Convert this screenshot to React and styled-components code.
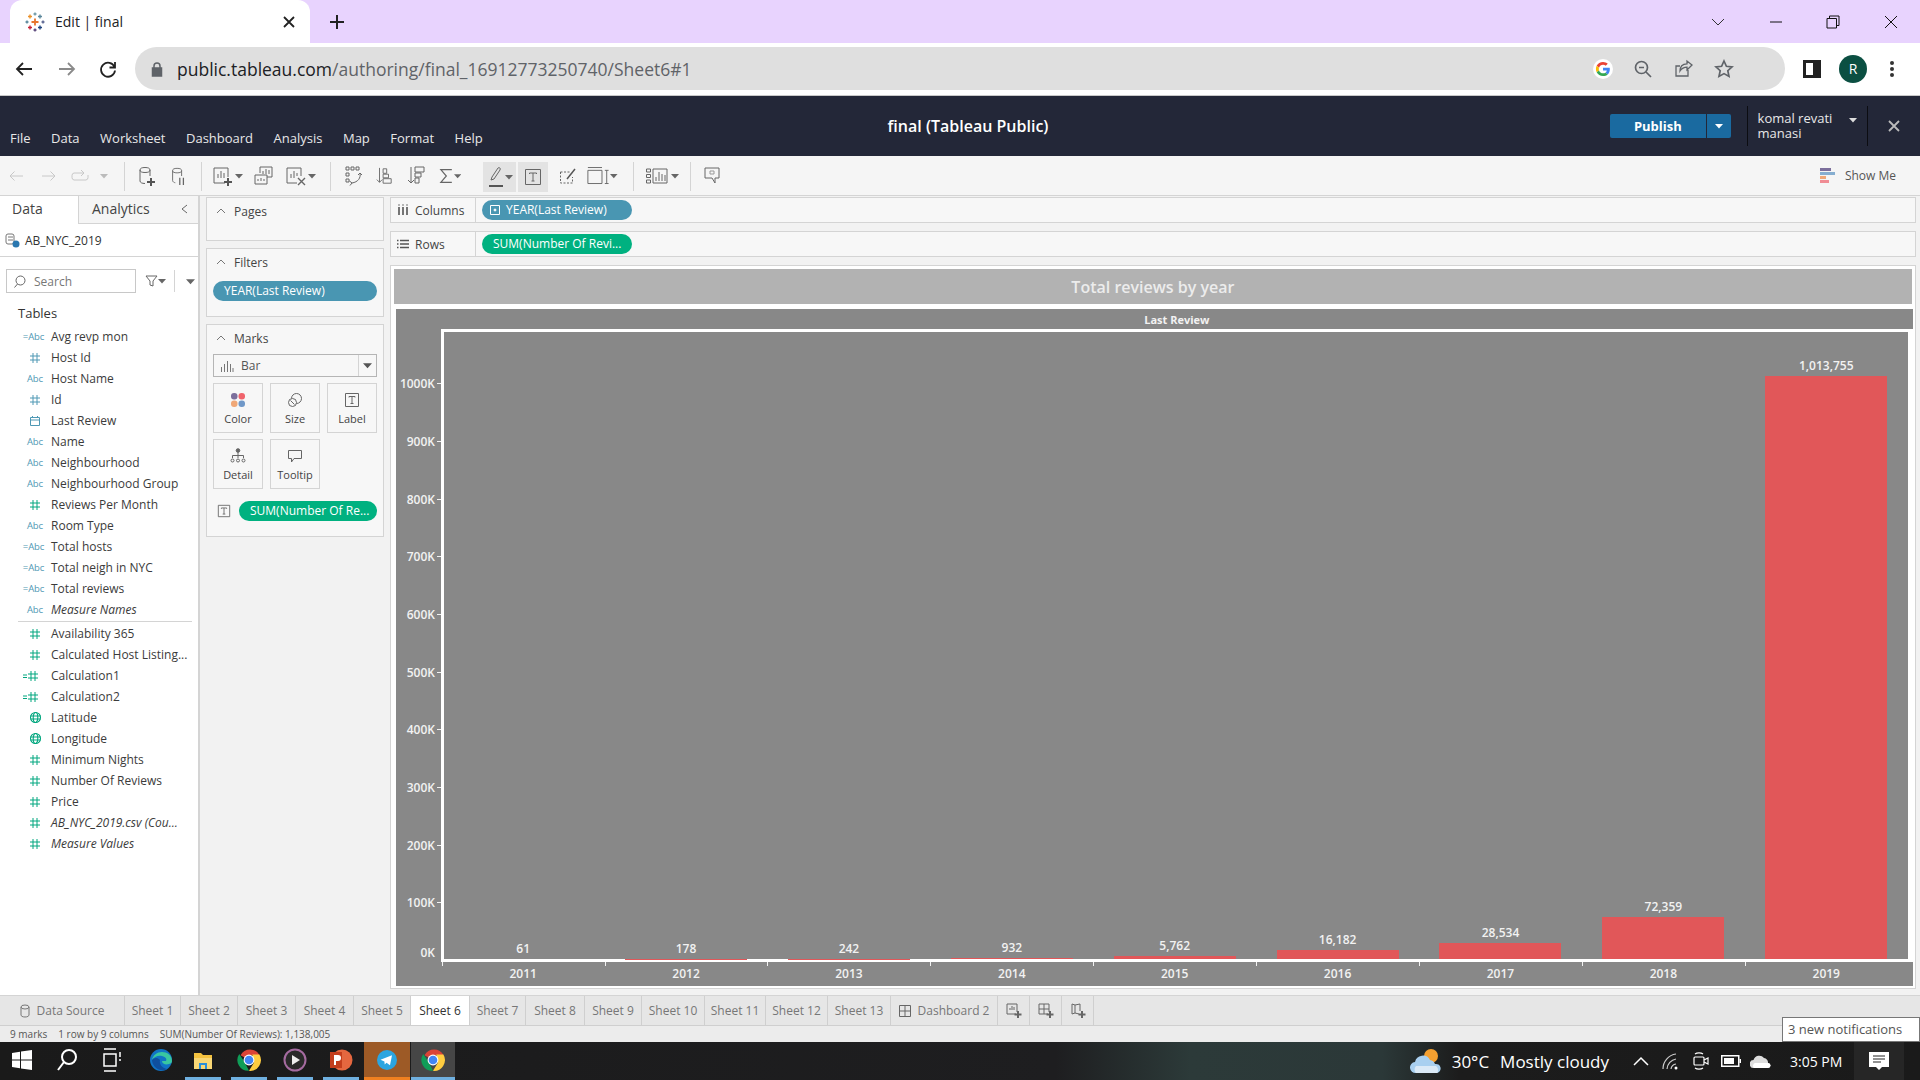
import React from 'react';
import styled, { createGlobalStyle } from 'styled-components';

const UI_FONT = `'Open Sans', 'Liberation Sans', sans-serif`;

const GlobalStyle = createGlobalStyle`
  html, body { margin: 0; padding: 0; background: #fff; overflow: hidden; }
  * { box-sizing: border-box; }
  body { font-family: ${UI_FONT}; }
`;

const Page = styled.div`
  position: relative;
  width: 1920px;
  height: 1080px;
  display: flex;
  flex-direction: column;
  overflow: hidden;
`;

/* browser chrome */
const TabStrip = styled.div`
  height: 43px;
  background: #e8d3fe;
  display: flex;
  align-items: stretch;
  padding-left: 10px;
`;
const BrowserTab = styled.div`
  width: 300px;
  background: #fff;
  border-radius: 12px 12px 0 0;
  display: flex;
  align-items: center;
  padding: 0 14px 0 15px;
  font-size: 14px;
  color: #202124;
`;
const TabTitle = styled.span`
  margin-left: 10px;
  flex: 1;
`;
const NewTab = styled.div`
  width: 54px;
  display: flex;
  align-items: center;
  justify-content: center;
`;
const WindowControls = styled.div`
  margin-left: auto;
  display: flex;
  align-items: center;
  padding-right: 0;
`;
const WinBtn = styled.div`
  width: ${p => p.$w}px;
  height: 36px;
  display: flex;
  align-items: center;
  justify-content: center;
`;
const BrowserBar = styled.div`
  height: 53px;
  background: #fff;
  border-bottom: 1px solid #c9c9c9;
  display: flex;
  align-items: center;
  padding: 0 0 1px 0;
`;
const NavBtn = styled.div`
  width: ${p => p.$w}px;
  display: flex;
  align-items: center;
  justify-content: center;
`;
const UrlBar = styled.div`
  width: 1650px;
  height: 43px;
  border-radius: 22px;
  background: #dfdfdf;
  display: flex;
  align-items: center;
  padding-left: 15px;
  font-size: 17.5px;
  color: #5f6368;
`;
const UrlHost = styled.span`
  color: #202124;
`;
const UrlText = styled.span`
  margin-left: 13px;
  flex: 1;
`;
const UrlIcon = styled.div`
  width: 40.5px;
  display: flex;
  justify-content: center;
`;
const Avatar = styled.div`
  width: 28px;
  height: 28px;
  border-radius: 50%;
  background: #0b4f42;
  color: #fff;
  font-size: 14px;
  display: flex;
  align-items: center;
  justify-content: center;
`;

/* tableau header */
const AppHeader = styled.div`
  height: 60px;
  background: #232738;
  display: grid;
  grid-template-columns: 1610px 310px;
  color: #fff;
`;
const HeaderLeft = styled.div`
  display: grid;
`;
const Menu = styled.div`
  grid-area: 1 / 1;
  display: flex;
  gap: 20.5px;
  align-self: end;
  padding: 0 0 9px 10px;
  font-size: 13px;
  color: #e8e8e8;
`;
const AppTitle = styled.div`
  grid-area: 1 / 1;
  justify-self: center;
  align-self: center;
  margin-left: 326px;
  font-size: 16px;
  font-weight: 600;
`;
const HeaderRight = styled.div`
  display: flex;
  align-items: center;
`;
const PublishMain = styled.div`
  width: 96px;
  height: 24px;
  background: #1a6aa0;
  border-radius: 2px 0 0 2px;
  font-size: 13px;
  font-weight: 700;
  display: flex;
  align-items: center;
  justify-content: center;
`;
const PublishArrow = styled.div`
  width: 24px;
  height: 24px;
  margin-left: 1px;
  background: #1a6aa0;
  border-radius: 0 2px 2px 0;
  display: flex;
  align-items: center;
  justify-content: center;
`;
const UserBox = styled.div`
  margin-left: 16px;
  width: 122px;
  height: 40px;
  border-left: 1px solid #0c0d12;
  border-right: 1px solid #0c0d12;
  padding: 5px 10px;
  font-size: 13px;
  line-height: 15px;
  color: #e8e8e8;
  display: flex;
  justify-content: space-between;
`;
const HeaderClose = styled.div`
  width: 52px;
  display: flex;
  justify-content: center;
`;

/* tableau toolbar */
const Toolbar = styled.div`
  height: 40px;
  background: #f5f5f5;
  border-bottom: 1px solid #d4d4d4;
  display: flex;
  align-items: stretch;
`;
const ToolCell = styled.div`
  width: ${p => p.$w}px;
  display: flex;
  align-items: center;
  justify-content: center;
`;
const ToolSep = styled.div`
  width: 1px;
  margin: 6px 0 4px;
  background: #d4d4d4;
`;
const ToolActive = styled.div`
  width: ${p => p.$w}px;
  height: 30px;
  margin: 6px 2px 0 0;
  background: #e3e3e3;
  display: flex;
  align-items: center;
  justify-content: center;
`;
const ShowMe = styled.div`
  margin-left: auto;
  padding-right: 24px;
  display: flex;
  align-items: center;
  gap: 9px;
  font-size: 12px;
  color: #555;
`;

/* workspace */
const Workspace = styled.div`
  height: 799px;
  display: flex;
`;
const DataPane = styled.div`
  width: 200px;
  background: #fff;
  border-right: 2px solid #d4d4d4;
  display: flex;
  flex-direction: column;
`;
const PaneTabs = styled.div`
  height: 28px;
  display: flex;
  font-size: 14px;
  color: #444;
`;
const PaneTab = styled.div`
  width: ${p => p.$w}px;
  padding-left: ${p => p.$pad}px;
  line-height: 26px;
  background: ${p => (p.$active ? '#fff' : '#f5f5f5')};
  border-right: ${p => (p.$active ? '1px solid #d4d4d4' : 'none')};
  border-bottom: ${p => (p.$active ? 'none' : '1px solid #d4d4d4')};
  display: flex;
`;
const Collapse = styled.span`
  margin-left: auto;
  padding-right: 8px;
`;
const SourceRow = styled.div`
  height: 33px;
  border-bottom: 1px solid #d4d4d4;
  display: flex;
  align-items: center;
  padding-left: 5px;
  gap: 5px;
  font-size: 12px;
  color: #333;
`;
const SearchRow = styled.div`
  height: 36px;
  display: flex;
  align-items: flex-end;
  padding-left: 6px;
`;
const SearchBox = styled.div`
  width: 130px;
  height: 24px;
  border: 1px solid #c8c8c8;
  display: flex;
  align-items: center;
  gap: 8px;
  padding-left: 6px;
  font-size: 12px;
  color: #777;
`;
const SearchTools = styled.div`
  height: 24px;
  display: flex;
  align-items: center;
`;
const SearchDivider = styled.div`
  width: 1px;
  height: 22px;
  background: #d4d4d4;
  margin: 0 11px 0 8px;
`;
const TablesTitle = styled.div`
  height: 33px;
  padding: 11px 0 0 18px;
  font-size: 13px;
  line-height: 18px;
  color: #333;
`;
const FieldRow = styled.div`
  height: 21px;
  display: flex;
  align-items: center;
  font-size: 12px;
  font-style: ${p => (p.$italic ? 'italic' : 'normal')};
  color: #3b3b3b;
  white-space: nowrap;
`;
const FieldIcon = styled.div`
  width: 51px;
  padding-left: 19px;
  flex: none;
  display: flex;
  align-items: center;
  justify-content: center;
`;
const AbcGlyph = styled.span`
  font-size: 9.5px;
  font-style: normal;
  color: #4f98b4;
  letter-spacing: -0.1px;
`;
const FieldDivider = styled.div`
  height: 1px;
  margin: 0 6px 0 18px;
  background: #d4d4d4;
`;
const FieldGap = styled.div`
  height: ${p => p.$h}px;
`;

const CardsPane = styled.div`
  width: 190px;
  background: #f2f2f2;
  padding: 1px 6px 0 6px;
  display: flex;
  flex-direction: column;
  gap: 7px;
`;
const Card = styled.div`
  height: ${p => p.$h}px;
  flex: none;
  background: #f7f7f7;
  border: 1px solid #d4d4d4;
  padding: 0 6px;
`;
const CardHead = styled.div`
  height: 26px;
  display: flex;
  align-items: center;
  gap: 7px;
  padding-left: 2px;
  font-size: 12px;
  color: #444;
`;
const Pill = styled.div`
  height: 20px;
  border-radius: 10px;
  background: ${p => (p.$green ? '#00b180' : '#4996b2')};
  color: #fff;
  font-size: 12px;
  line-height: 20px;
  white-space: nowrap;
  display: flex;
  align-items: center;
  gap: 5px;
  width: ${p => (p.$w ? `${p.$w}px` : '100%')};
  padding-left: ${p => p.$pad || 11}px;
`;
const MarkSelect = styled.div`
  height: 23px;
  margin-top: 3px;
  border: 1px solid #b5b5b5;
  background: #f7f7f7;
  display: flex;
  align-items: center;
  font-size: 12px;
  color: #555;
`;
const MarkSelectLabel = styled.div`
  flex: 1;
  display: flex;
  align-items: center;
  gap: 7px;
  padding-left: 6px;
`;
const MarkSelectArrow = styled.div`
  width: 18px;
  height: 100%;
  border-left: 1px solid #d4d4d4;
  display: flex;
  align-items: center;
  justify-content: center;
`;
const MarkGrid = styled.div`
  margin-top: 6px;
  display: grid;
  grid-template-columns: repeat(3, 50px);
  grid-auto-rows: 50px;
  gap: 6px 7px;
`;
const MarkBtn = styled.div`
  border: 1px solid #d4d4d4;
  display: flex;
  flex-direction: column;
  align-items: center;
  justify-content: flex-end;
  padding-bottom: 6px;
  gap: 3px;
  font-size: 11px;
  color: #444;
`;
const EncodingRow = styled.div`
  margin-top: 12px;
  display: flex;
  align-items: center;
  justify-content: space-between;
  padding-left: 4px;
`;

const ViewPane = styled.div`
  flex: 1;
  background: #f2f2f2;
  padding: 1px 7px 6px 0;
  display: flex;
  flex-direction: column;
  gap: 8px;
`;
const Shelf = styled.div`
  height: 26px;
  flex: none;
  background: #f7f7f7;
  border: 1px solid #d4d4d4;
  display: flex;
  align-items: center;
`;
const ShelfLabel = styled.div`
  width: 85px;
  height: 100%;
  border-right: 1px solid #d4d4d4;
  padding-left: 6px;
  display: flex;
  align-items: center;
  gap: 6px;
  font-size: 12px;
  color: #444;
  margin-right: 6px;
`;
const Canvas = styled.div`
  flex: 1;
  background: #fff;
  border: 1px solid #d4d4d4;
  padding: 3px 3px 2px 3px;
  display: flex;
  flex-direction: column;
`;
const ChartTitle = styled.div`
  height: 35px;
  flex: none;
  margin-right: 0;
  background: #b2b2b2;
  color: #ececec;
  font-size: 16px;
  font-weight: 600;
  display: flex;
  align-items: center;
  justify-content: center;
`;
const SheetPane = styled.div`
  flex: 1;
  margin: 5px -1px 0 2px;
  background: #888;
  display: grid;
  grid-template-columns: 45px 1fr;
  grid-template-rows: 20px 633px 1fr;
  color: #f2f2f2;
`;
const ColumnHeader = styled.div`
  grid-column: 1 / 3;
  padding-left: 45px;
  font-size: 11px;
  font-weight: 700;
  display: flex;
  align-items: center;
  justify-content: center;
`;
const YAxis = styled.div`
  padding-top: 25.85px;
`;
const YTick = styled.div`
  height: ${p => (p.$zero ? 40.6 : 57.7)}px;
  display: flex;
  align-items: center;
  justify-content: flex-end;
  font-size: 12px;
  font-weight: 600;
  gap: 2px;
`;
const TickMark = styled.span`
  width: 4px;
  height: 1px;
  background: ${p => (p.$hidden ? 'transparent' : '#f2f2f2')};
`;
const PlotFrame = styled.div`
  background: #fff;
  padding: 3px 5px 3px 3px;
  display: flex;
`;
const Plot = styled.div`
  flex: 1;
  background: #888;
  display: flex;
  align-items: stretch;
  padding-left: 0;
  margin-left: 0;
`;
const PlotColumns = styled.div`
  display: flex;
  margin-left: -2.3px;
`;
const PlotColumn = styled.div`
  width: 162.9px;
  flex: none;
  display: flex;
  flex-direction: column;
  align-items: center;
  justify-content: flex-end;
`;
const BarValue = styled.div`
  font-size: 12px;
  font-weight: 600;
  line-height: 16px;
  margin-bottom: 2px;
`;
const Bar = styled.div`
  width: 122px;
  background: #e15759;
`;
const XAxis = styled.div`
  grid-column: 1 / 3;
  padding-left: 45.7px;
  display: flex;
`;
const XCell = styled.div`
  width: 162.9px;
  flex: none;
  padding-top: 3px;
  text-align: center;
  font-size: 12px;
  font-weight: 600;
  background: linear-gradient(#f2f2f2, #f2f2f2) left top / 1px 4px no-repeat;
`;

/* sheet tabs */
const TabBar = styled.div`
  height: 31px;
  background: #e6e6e6;
  border-top: 1px solid #d4d4d4;
  border-bottom: 1px solid #cfcfcf;
  display: flex;
`;
const SheetTab = styled.div`
  width: ${p => p.$w}px;
  background: ${p => (p.$active ? '#fff' : 'transparent')};
  color: ${p => (p.$active ? '#333' : '#777')};
  border-right: 1px solid #cfcfcf;
  font-size: 12px;
  display: flex;
  align-items: center;
  justify-content: center;
  gap: 7px;
  white-space: nowrap;
`;
const StatusBar = styled.div`
  height: 16px;
  background: #ececec;
  display: flex;
  align-items: center;
  gap: 11px;
  padding-left: 10px;
  font-size: 10px;
  color: #555;
`;

/* windows taskbar */
const Taskbar = styled.div`
  height: 38px;
  flex: none;
  background: linear-gradient(90deg, #1a1a1a 0, #1e1e20 55%, #2c3a39 62%, #2b3838 72%, #1c1c1c 76%, #1a1a1a 100%);
  display: flex;
  align-items: center;
  color: #fff;
`;
const TaskIcon = styled.div`
  width: ${p => p.$w}px;
  height: 38px;
  flex: none;
  display: flex;
  align-items: center;
  justify-content: center;
  background: ${p => p.$bg || 'transparent'};
  border-bottom: 3px solid ${p => p.$line || 'transparent'};
  margin-right: ${p => p.$mr || 0}px;
`;
const Tray = styled.div`
  margin-left: auto;
  display: flex;
  align-items: center;
  height: 38px;
`;
const Weather = styled.span`
  font-size: 17px;
  margin-left: ${p => p.$ml}px;
  white-space: nowrap;
`;
const TrayIcon = styled.div`
  width: 30px;
  display: flex;
  justify-content: center;
`;
const Clock = styled.span`
  font-size: 14px;
  width: 52px;
  margin: 0 12px 0 14px;
  white-space: nowrap;
`;
const NoticeBtn = styled.div`
  width: 50px;
  height: 38px;
  background: #262626;
  display: flex;
  align-items: center;
  justify-content: center;
  margin-right: 16px;
`;
const Notice = styled.div`
  position: absolute;
  right: 0;
  bottom: 38px;
  width: 138px;
  height: 25px;
  background: #fff;
  border: 1px solid #777;
  font-size: 13px;
  line-height: 23px;
  padding-left: 5px;
  color: #555;
  white-space: nowrap;
`;

/* icons */
const Ic = ({ w = 20, h = 20, c = '#666', sw = 1, children, vb }) => (
  <svg width={w} height={h} viewBox={vb || `0 0 ${w} ${h}`} fill="none" stroke={c} strokeWidth={sw}>
    {children}
  </svg>
);
const Caret = ({ c = '#666', s = 6 }) => (
  <svg width={s + 2} height={s} viewBox="0 0 8 6"><path d="M0 1h8L4 5.5z" fill={c} /></svg>
);
const Hash = ({ c = '#00a67e' }) => (
  <Ic w={12} h={12} c={c}>
    <path d="M4 1v10M8 1v10M1 4h10M1 8h10" />
  </Ic>
);
const CalcHash = ({ c = '#00a67e' }) => (
  <span style={{ display: 'flex', marginLeft: -9 }}>
    <Ic w={4} h={12} c={c}><path d="M0 5h4M0 7.5h4" /></Ic>
    <Hash c={c} />
  </span>
);
const CalendarIcon = () => (
  <Ic w={12} h={12} c="#4f98b4">
    <path d="M1.5 2.5h9v8h-9zM1.5 5h9M3.5 1v2M8.5 1v2" />
  </Ic>
);
const GlobeIcon = () => (
  <Ic w={13} h={13} c="#00a67e" sw={1.1}>
    <circle cx="6.5" cy="6.5" r="5" />
    <ellipse cx="6.5" cy="6.5" rx="2.3" ry="5" />
    <path d="M1.5 5h10M1.5 8h10" />
  </Ic>
);
const TableauLogo = () => (
  <svg width="20" height="20" viewBox="0 0 20 20" strokeWidth="1.4" fill="none">
    <path d="M10 6.5v7M6.5 10h7" stroke="#e8762d" strokeWidth="1.8" />
    <path d="M5 2.5v4M3 4.5h4" stroke="#eb9129" />
    <path d="M15 2.5v4M13 4.5h4" stroke="#5b879b" />
    <path d="M5 13.5v4M3 15.5h4" stroke="#c72035" />
    <path d="M15 13.5v4M13 15.5h4" stroke="#1f447e" />
    <path d="M10 .5v3M8.5 2h3" stroke="#7099a6" />
    <path d="M10 16.5v3M8.5 18h3" stroke="#59457a" />
    <path d="M2 8.5v3M.5 10h3" stroke="#59879b" />
    <path d="M18 8.5v3M16.5 10h3" stroke="#5b6591" />
  </svg>
);
const GoogleG = () => (
  <svg width="20" height="20" viewBox="0 0 48 48">
    <circle cx="24" cy="24" r="24" fill="#fff" />
    <g transform="translate(7 7) scale(.71)">
      <path fill="#EA4335" d="M24 9.5c3.5 0 6.7 1.2 9.2 3.600l6.900-6.900C35.900 2.400 30.500 0 24 0 14.600 0 6.500 5.400 2.600 13.300l8 6.200C12.500 13.700 17.800 9.500 24 9.500z" />
      <path fill="#4285F4" d="M47 24.500c0-1.600-.1-3.100-.4-4.500H24v9h12.900c-.6 3-2.200 5.500-4.700 7.200l7.700 6C44.400 37.900 47 31.800 47 24.500z" />
      <path fill="#FBBC05" d="M10.500 28.600c-.5-1.400-.8-3-.8-4.600s.3-3.200.8-4.600l-8-6.200C.9 16.500 0 20.100 0 24s.9 7.500 2.600 10.800l7.900-6.200z" />
      <path fill="#34A853" d="M24 48c6.500 0 11.900-2.100 15.900-5.800l-7.700-6c-2.100 1.400-4.900 2.300-8.200 2.300-6.200 0-11.500-4.200-13.400-9.900l-8 6.200C6.500 42.600 14.600 48 24 48z" />
    </g>
  </svg>
);
const ChromeIcon = ({ s = 26 }) => (
  <svg width={s} height={s} viewBox="0 0 24 24">
    <path d="M12 12 4.200 7.500A10 10 0 0 1 21.800 7.500H12z" fill="#db4437" transform="translate(0 0)" />
    <path d="M12 22A10 10 0 0 1 3 6.500L8 14l4 8z" fill="#0f9d58" />
    <path d="M21.600 7A10 10 0 0 1 12 22l4.500-7.500L15 7z" fill="#ffcd40" />
    <circle cx="12" cy="12" r="5" fill="#fff" />
    <circle cx="12" cy="12" r="4" fill="#4285f4" />
  </svg>
);

const ToolIcons = {
  undo: <Ic c="#c8c8c8"><path d="M17 10H4M8.500 5.500 4 10l4.500 4.500" /></Ic>,
  redo: <Ic c="#c8c8c8"><path d="M3 10h13M11.500 5.500 16 10l-4.500 4.500" /></Ic>,
  redo2: <Ic w={22} c="#c8c8c8"><path d="M14 7H5a2.500 2.500 0 0 0-2 2.500v2A2.500 2.500 0 0 0 5 14h12a2.500 2.500 0 0 0 2-2.500V9M12 4l3 3-3 3" /></Ic>,
  dbAdd: <Ic w={20} h={24}><ellipse cx="8" cy="6" rx="5" ry="2.500" /><path d="M3 6v11c0 1.500 2 2.500 5 2.500M13 6v6" /><path d="M14 14v8M10 18h8" strokeWidth="2" stroke="#555" /></Ic>,
  dbPause: <Ic w={20} h={24}><ellipse cx="9" cy="6" rx="5" ry="2.500" /><path d="M4 6v11c0 1.500 2 2.500 3 2.500M14 6v6" /><path d="M12 14v8M16 14v8" strokeWidth="1.400" /></Ic>,
  sheetAdd: <Ic w={24} h={24}><path d="M14 19H3V4h14v9" /><path d="M7 14v-4M10 14V7M13 14v-5" /><path d="M17 14v8M13 18h8" strokeWidth="2" stroke="#555" /></Ic>,
  sheetCopy: <Ic w={22} h={24}><path d="M7 9V3h12v10h-5" /><path d="M10 10V7M13 10V5M16 10V6" /><path d="M2 11h12v9H2zM5 17v-2M8 17v-3M11 17v-2" /></Ic>,
  sheetClear: <Ic w={24} h={24}><path d="M13 19H3V4h14v8" /><path d="M7 14v-4M10 14V7M13 12V9" /><path d="m14 14 7 7M21 14l-7 7" strokeWidth="1.400" /></Ic>,
  swap: <Ic w={22} h={24}><path d="M4 3h3v3H4zM9 3h3v3H9zM14 3h3v3h-3zM4 9h3v3H4zM4 15h3v3H4z" /><path d="M18 9c1 5-2 9-8 10M7.500 17l2.500 2-2 2.500M16 11l2-2 2 2" /></Ic>,
  sortAsc: <Ic w={20} h={24}><path d="M5 3v16M2 16l3 3 3-3" /><path d="M9 4h4v5H9zM9 10h6v4H9zM9 15h9v5H9z" /></Ic>,
  sortDesc: <Ic w={20} h={24}><path d="M5 3v16M2 16l3 3 3-3" /><path d="M9 3h9v5H9zM9 9h6v4H9zM9 14h4v5H9z" /></Ic>,
  sigma: <Ic w={16} h={20} sw={1.300}><path d="M14 3H2l6 7-6 7h12" /></Ic>,
  pen: <Ic w={18} h={26}><path d="m4 16 1-3 6-9c1-1 3 0 2 2l-6 9z" /><path d="M2 22h14" stroke="#555" strokeWidth="2" /></Ic>,
  textBox: <Ic w={18} h={18}><path d="M1.500 1.500h15v15h-15zM5.500 6V5h7v1M9 5v8M7.500 13h3" /></Ic>,
  fit: <Ic w={18} h={18}><path d="M1.500 5h9M1.500 5v11h12V10" strokeDasharray="2 1.500" /><path d="m8 12 8-10" strokeWidth="1.500" stroke="#555" /></Ic>,
  size: <Ic w={26} h={22}><path d="M2 2h15M2 5h15v14H2zM20 5h4M20 19h4M22 5v14" /></Ic>,
  showHide: <Ic w={26} h={20}><path d="M1.500 3h4v3h-4zM1.500 8.500h4v3h-4zM1.500 14h4v3h-4zM8 3h14v14H8zM11 15v-4M14 15V6M17 15V8M20 15v-6" /></Ic>,
  tooltip: <Ic w={18} h={18}><path d="M2 2h14v10H8l-3 3v-3H2z" /></Ic>
};

const FIELDS_TOP = [
  ['calcAbc', 'Avg revp mon'],
  ['hashBlue', 'Host Id'],
  ['abc', 'Host Name'],
  ['hashBlue', 'Id'],
  ['date', 'Last Review'],
  ['abc', 'Name'],
  ['abc', 'Neighbourhood'],
  ['abc', 'Neighbourhood Group'],
  ['hash', 'Reviews Per Month'],
  ['abc', 'Room Type'],
  ['calcAbc', 'Total hosts'],
  ['calcAbc', 'Total neigh in NYC'],
  ['calcAbc', 'Total reviews'],
  ['abc', 'Measure Names', true]
];
const FIELDS_BOTTOM = [
  ['hash', 'Availability 365'],
  ['hash', 'Calculated Host Listing...'],
  ['calcHash', 'Calculation1'],
  ['calcHash', 'Calculation2'],
  ['globe', 'Latitude'],
  ['globe', 'Longitude'],
  ['hash', 'Minimum Nights'],
  ['hash', 'Number Of Reviews'],
  ['hash', 'Price'],
  ['hash', 'AB_NYC_2019.csv (Cou...', true],
  ['hash', 'Measure Values', true]
];

const fieldIcon = type => {
  if (type === 'abc') return <AbcGlyph>Abc</AbcGlyph>;
  if (type === 'calcAbc') return <AbcGlyph style={{ marginLeft: -3 }}>=Abc</AbcGlyph>;
  if (type === 'hashBlue') return <Hash c="#4f98b4" />;
  if (type === 'hash') return <Hash />;
  if (type === 'calcHash') return <CalcHash />;
  if (type === 'date') return <CalendarIcon />;
  return <GlobeIcon />;
};

const YEARS = [
  [2011, 61, '61'],
  [2012, 178, '178'],
  [2013, 242, '242'],
  [2014, 932, '932'],
  [2015, 5762, '5,762'],
  [2016, 16182, '16,182'],
  [2017, 28534, '28,534'],
  [2018, 72359, '72,359'],
  [2019, 1013755, '1,013,755']
];
const BAR_SCALE = 0.000575;
const TICKS = ['1000K', '900K', '800K', '700K', '600K', '500K', '400K', '300K', '200K', '100K'];

const SHEETS = [
  ['Sheet 1', 56], ['Sheet 2', 57], ['Sheet 3', 58], ['Sheet 4', 58], ['Sheet 5', 57],
  ['Sheet 6', 59], ['Sheet 7', 56], ['Sheet 8', 59], ['Sheet 9', 57], ['Sheet 10', 63],
  ['Sheet 11', 61], ['Sheet 12', 62], ['Sheet 13', 63]
];

const Chevron = () => (
  <Ic w={12} h={12} c="#777"><path d="m2 8 4-4 4 4" /></Ic>
);

const App = () => (
  <Page>
    <GlobalStyle />
    <TabStrip>
      <BrowserTab>
        <TableauLogo />
        <TabTitle>Edit | final</TabTitle>
        <Ic w={14} h={14} c="#222" sw={1.800}><path d="m2 2 10 10M12 2 2 12" /></Ic>
      </BrowserTab>
      <NewTab>
        <Ic w={16} h={16} c="#222" sw={2}><path d="M8 1v14M1 8h14" /></Ic>
      </NewTab>
      <WindowControls>
        <WinBtn $w={58}><Ic w={14} h={10} c="#333"><path d="m1 2 6 6 6-6" /></Ic></WinBtn>
        <WinBtn $w={57}><Ic w={14} h={14} c="#111"><path d="M1 7h12" /></Ic></WinBtn>
        <WinBtn $w={58}><Ic w={14} h={14} c="#111"><path d="M1 3.500h9.500V13H1zM3.500 3.500V1H13v9.500h-2.500" /></Ic></WinBtn>
        <WinBtn $w={58}><Ic w={14} h={14} c="#111"><path d="m1 1 12 12M13 1 1 13" /></Ic></WinBtn>
      </WindowControls>
    </TabStrip>

    <BrowserBar>
      <NavBtn $w={47}><Ic w={20} h={20} c="#222" sw={1.800}><path d="M18 10H3M9 4l-6 6 6 6" /></Ic></NavBtn>
      <NavBtn $w={40}><Ic w={20} h={20} c="#8a8a8a" sw={1.800}><path d="M2 10h15M11 4l6 6-6 6" /></Ic></NavBtn>
      <NavBtn $w={42}><Ic w={20} h={20} c="#222" sw={1.800}><path d="M16.500 8A7 7 0 1 0 17 11.500M17 3v5.500h-5.500" /></Ic></NavBtn>
      <NavBtn $w={6} />
      <UrlBar>
        <Ic w={14} h={16} c="#5f6368" sw={1.500}><path d="M4 7V5a3 3 0 0 1 6 0v2" /><path d="M2.500 7h9v8h-9z" fill="#5f6368" /></Ic>
        <UrlText><UrlHost>public.tableau.com</UrlHost>/authoring/final_16912773250740/Sheet6#1</UrlText>
        <UrlIcon><GoogleG /></UrlIcon>
        <UrlIcon><Ic w={20} h={20} c="#5f6368" sw={1.700}><circle cx="8.500" cy="8.500" r="6" /><path d="m13 13 5 5M6 8.500h5" /></Ic></UrlIcon>
        <UrlIcon><Ic w={20} h={20} c="#5f6368" sw={1.300}><path d="M14 11v6H2V7h4M18 6l-5-4v2.800C8 5 6 8 6 12c2-3 4-3.800 7-3.800V11z" /></Ic></UrlIcon>
        <UrlIcon><Ic w={20} h={20} c="#5f6368" sw={1.700}><path d="m10 2 2.400 5.300 5.600.6-4.200 3.800 1.200 5.700L10 14.600l-5 2.800 1.200-5.700L2 7.900l5.600-.6z" /></Ic></UrlIcon>
        <UrlIcon />
      </UrlBar>
      <NavBtn $w={-1} />
      <NavBtn $w={54}><svg width="18" height="18" viewBox="0 0 18 18"><path d="M0 0h18v18H0z" fill="#222" /><path d="M3 3h7v12H3z" fill="#fff" /></svg></NavBtn>
      <NavBtn $w={28}><Avatar>R</Avatar></NavBtn>
      <NavBtn $w={50}><svg width="4" height="18" viewBox="0 0 4 18"><circle cx="2" cy="3" r="2" fill="#333" /><circle cx="2" cy="9" r="2" fill="#333" /><circle cx="2" cy="15" r="2" fill="#333" /></svg></NavBtn>
    </BrowserBar>

    <AppHeader>
      <HeaderLeft>
        <AppTitle>final (Tableau Public)</AppTitle>
        <Menu>
          {['File', 'Data', 'Worksheet', 'Dashboard', 'Analysis', 'Map', 'Format', 'Help'].map(m => (
            <span key={m}>{m}</span>
          ))}
        </Menu>
      </HeaderLeft>
      <HeaderRight>
        <PublishMain>Publish</PublishMain>
        <PublishArrow><Caret c="#fff" s={6} /></PublishArrow>
        <UserBox>
          <span>komal revati<br />manasi</span>
          <span><Caret c="#ddd" s={6} /></span>
        </UserBox>
        <HeaderClose><Ic w={12} h={12} c="#bbb" sw={1.800}><path d="m1 1 10 10M11 1 1 11" /></Ic></HeaderClose>
      </HeaderRight>
    </AppHeader>

    <Toolbar>
      <ToolCell $w={32}>{ToolIcons.undo}</ToolCell>
      <ToolCell $w={34}>{ToolIcons.redo}</ToolCell>
      <ToolCell $w={28}>{ToolIcons.redo2}</ToolCell>
      <ToolCell $w={20}><Caret c="#bbb" /></ToolCell>
      <ToolCell $w={10} />
      <ToolSep />
      <ToolCell $w={44}>{ToolIcons.dbAdd}</ToolCell>
      <ToolCell $w={18}>{ToolIcons.dbPause}</ToolCell>
      <ToolCell $w={14} />
      <ToolSep />
      <ToolCell $w={50}>{ToolIcons.sheetAdd}<Caret /></ToolCell>
      <ToolCell $w={24}>{ToolIcons.sheetCopy}</ToolCell>
      <ToolCell $w={48}>{ToolIcons.sheetClear}<Caret /></ToolCell>
      <ToolCell $w={6} />
      <ToolSep />
      <ToolCell $w={44}>{ToolIcons.swap}</ToolCell>
      <ToolCell $w={18}>{ToolIcons.sortAsc}</ToolCell>
      <ToolCell $w={46}>{ToolIcons.sortDesc}</ToolCell>
      <ToolCell $w={22}>{ToolIcons.sigma}<Caret /></ToolCell>
      <ToolCell $w={22} />
      <ToolActive $w={33}>{ToolIcons.pen}<Caret /></ToolActive>
      <ToolActive $w={30}>{ToolIcons.textBox}</ToolActive>
      <ToolCell $w={36}>{ToolIcons.fit}</ToolCell>
      <ToolCell $w={32}>{ToolIcons.size}<Caret /></ToolCell>
      <ToolCell $w={15} />
      <ToolSep />
      <ToolCell $w={56}>{ToolIcons.showHide}<Caret /></ToolCell>
      <ToolSep />
      <ToolCell $w={42}>
        <Ic w={18} h={20}><path d="M2 2h14v10h-4v5l-3-5H2z" /><path d="M7 5h4v3H7z" stroke="#999" /></Ic>
      </ToolCell>
      <ShowMe>
        <svg width="16" height="16" viewBox="0 0 16 16">
          <path d="M0 0h11v3H0z" fill="#7c6f9c" />
          <path d="M0 4h15v3H0z" fill="#86aed0" />
          <path d="M0 8h6v3H0z" fill="#f0a878" />
          <path d="M0 12h9v3H0z" fill="#f08c94" />
        </svg>
        Show Me
      </ShowMe>
    </Toolbar>

    <Workspace>
      <DataPane>
        <PaneTabs>
          <PaneTab $w={79} $pad={12} $active>Data</PaneTab>
          <PaneTab $w={119} $pad={13}>
            Analytics
            <Collapse><Ic w={10} h={26} vb="0 -8 10 26" c="#666"><path d="M7 1 2 5l5 4" /></Ic></Collapse>
          </PaneTab>
        </PaneTabs>
        <SourceRow>
          <svg width="15" height="16" viewBox="0 0 15 16" fill="none" stroke="#777">
            <rect x="1" y="2" width="8" height="10" rx="2" />
            <path d="M3 5h5M3 8h5" />
            <circle cx="11" cy="12" r="3.500" fill="#2a78b0" stroke="none" />
          </svg>
          AB_NYC_2019
        </SourceRow>
        <SearchRow>
          <SearchBox>
            <Ic w={13} h={13} c="#666"><circle cx="7.500" cy="5.500" r="4.500" /><path d="m4.500 9-3 3.500" /></Ic>
            Search
          </SearchBox>
          <SearchTools>
            <NavBtn $w={9} />
            <Ic w={13} h={14} c="#666"><path d="M1 2h11L8 7v5l-3-1V7z" /></Ic>
            <Caret />
            <SearchDivider />
            <Caret c="#666" s={7} />
          </SearchTools>
        </SearchRow>
        <TablesTitle>Tables</TablesTitle>
        {FIELDS_TOP.map(([type, name, italic]) => (
          <FieldRow key={name} $italic={italic}>
            <FieldIcon>{fieldIcon(type)}</FieldIcon>
            {name}
          </FieldRow>
        ))}
        <FieldGap $h={1} />
        <FieldDivider />
        <FieldGap $h={1} />
        {FIELDS_BOTTOM.map(([type, name, italic]) => (
          <FieldRow key={name} $italic={italic}>
            <FieldIcon>{fieldIcon(type)}</FieldIcon>
            {name}
          </FieldRow>
        ))}
      </DataPane>

      <CardsPane>
        <Card $h={44}>
          <CardHead><Chevron />Pages</CardHead>
        </Card>
        <Card $h={69}>
          <CardHead><Chevron />Filters</CardHead>
          <FieldGap $h={6} />
          <Pill>YEAR(Last Review)</Pill>
        </Card>
        <Card $h={213}>
          <CardHead><Chevron />Marks</CardHead>
          <MarkSelect>
            <MarkSelectLabel>
              <Ic w={14} h={14} c="#777"><path d="M1.500 8v5M4.500 5v8M7.500 2v11M10.500 5v8M13 9v4" /></Ic>
              Bar
            </MarkSelectLabel>
            <MarkSelectArrow><Caret c="#555" s={7} /></MarkSelectArrow>
          </MarkSelect>
          <MarkGrid>
            <MarkBtn>
              <svg width="16" height="16" viewBox="0 0 16 16">
                <rect x="1" y="1" width="6.500" height="6.500" rx="3" fill="#7c6f9c" />
                <rect x="8.500" y="1" width="6.500" height="6.500" rx="3" fill="#f0646c" />
                <rect x="1" y="8.500" width="6.500" height="6.500" rx="3" fill="#f0a878" />
                <rect x="8.500" y="8.500" width="6.500" height="6.500" rx="3" fill="#7098c8" />
              </svg>
              Color
            </MarkBtn>
            <MarkBtn>
              <Ic w={16} h={16}><circle cx="9.500" cy="6.500" r="5" /><circle cx="5.500" cy="10.500" r="4" fill="#f7f7f7" /><path d="m3.500 8.500 4 4" /></Ic>
              Size
            </MarkBtn>
            <MarkBtn>
              <Ic w={16} h={16}>{<path d="M1.500 1.500h13v13h-13zM5 5.500V4.500h6v1M8 4.500v7M6.500 11.500h3" />}</Ic>
              Label
            </MarkBtn>
            <MarkBtn>
              <Ic w={16} h={16}><circle cx="8" cy="2.500" r="1.800" fill="#666" /><path d="M8 4v3M2.500 10V7.500h11V10M8 7.500V10" /><circle cx="2.500" cy="12.500" r="1.500" /><circle cx="8" cy="12.500" r="1.500" /><circle cx="13.500" cy="12.500" r="1.500" /></Ic>
              Detail
            </MarkBtn>
            <MarkBtn>
              <Ic w={16} h={16}><path d="M1.500 2.500h13v8H7L4.500 14v-3.500h-3z" /></Ic>
              Tooltip
            </MarkBtn>
          </MarkGrid>
          <EncodingRow>
            <Ic w={14} h={16} vb="0 0 16 16"><path d="M1.500 1.500h13v13h-13zM5 5.500V4.500h6v1M8 4.500v7M6.500 11.500h3" /></Ic>
            <Pill $green $w={138} $pad={11}>SUM(Number Of Re...</Pill>
          </EncodingRow>
        </Card>
      </CardsPane>

      <ViewPane>
        <Shelf>
          <ShelfLabel>
            <Ic w={12} h={12} c="#555" sw={1.600}><path d="M2 3v8M6 3v8M10 3v8M2 .5v1M6 .5v1M10 .5v1" /></Ic>
            Columns
          </ShelfLabel>
          <Pill $w={150} $pad={7}>
            <Ic w={12} h={12} c="#fff"><path d="M1.500 1.500h9v9h-9z" /><circle cx="6" cy="6" r="1" fill="#fff" /></Ic>
            YEAR(Last Review)
          </Pill>
        </Shelf>
        <Shelf>
          <ShelfLabel>
            <Ic w={12} h={12} c="#555" sw={1.600}><path d="M3 2.500h9M3 6h9M3 9.500h9M0 2.500h1.500M0 6h1.500M0 9.500h1.500" /></Ic>
            Rows
          </ShelfLabel>
          <Pill $green $w={150} $pad={11}>SUM(Number Of Revi...</Pill>
        </Shelf>
        <Canvas>
          <ChartTitle>Total reviews by year</ChartTitle>
          <SheetPane>
            <ColumnHeader>Last Review</ColumnHeader>
            <YAxis>
              {TICKS.map(t => (
                <YTick key={t}>{t}<TickMark /></YTick>
              ))}
              <YTick $zero>0K<TickMark $hidden /></YTick>
            </YAxis>
            <PlotFrame>
              <Plot>
                <PlotColumns>
                  {YEARS.map(([year, value, label]) => (
                    <PlotColumn key={year}>
                      <BarValue>{label}</BarValue>
                      <Bar style={{ height: value * BAR_SCALE }} />
                    </PlotColumn>
                  ))}
                </PlotColumns>
              </Plot>
            </PlotFrame>
            <XAxis>
              {YEARS.map(([year]) => (
                <XCell key={year}>{year}</XCell>
              ))}
            </XAxis>
          </SheetPane>
        </Canvas>
      </ViewPane>
    </Workspace>

    <TabBar>
      <SheetTab $w={125}>
        <Ic w={10} h={14} c="#777"><ellipse cx="5" cy="3" rx="4" ry="2" /><path d="M1 3v8c0 1 1.500 2 4 2s4-1 4-2V3" /></Ic>
        Data Source
      </SheetTab>
      {SHEETS.map(([name, w]) => (
        <SheetTab key={name} $w={w} $active={name === 'Sheet 6'}>{name}</SheetTab>
      ))}
      <SheetTab $w={107}>
        <Ic w={12} h={12} c="#666"><path d="M.5.500h11v11H.5zM6 .5v11M.5 6h11" /></Ic>
        Dashboard 2
      </SheetTab>
      <SheetTab $w={32}><Ic w={16} h={16} c="#666"><path d="M10 11H1V1h10v8M4 7V5M6 7V3M8 7V4" /><path d="M12 8v7M8.500 11.500h7" strokeWidth="2" /></Ic></SheetTab>
      <SheetTab $w={32}><Ic w={16} h={16} c="#666"><path d="M10 11H1V1h10v8M6 1v10M1 6h10" /><path d="M12 8v7M8.500 11.500h7" strokeWidth="2" /></Ic></SheetTab>
      <SheetTab $w={32}><Ic w={16} h={16} c="#666"><path d="M9 11 5 10l-3 1V1l3 1 5-1v7M5 2v8" /><path d="M12 8v7M8.500 11.500h7" strokeWidth="2" /></Ic></SheetTab>
    </TabBar>

    <StatusBar>
      <span>9 marks</span>
      <span>1 row by 9 columns</span>
      <span>SUM(Number Of Reviews): 1,138,005</span>
    </StatusBar>

    <Taskbar>
      <TaskIcon $w={44}>
        <svg width="20" height="20" viewBox="0 0 20 20" fill="#fff"><path d="M0 3l8-1.200V9.500H0zM9 1.600 20 0v9.500H9zM0 10.500h8v7.700L0 17zM9 10.500h11V20L9 18.400z" /></svg>
      </TaskIcon>
      <TaskIcon $w={46}>
        <Ic w={22} h={24} c="#fff" sw={2}><circle cx="13" cy="9" r="7" /><path d="m8 14-6 8" /></Ic>
      </TaskIcon>
      <TaskIcon $w={44} $mr={3}>
        <Ic w={22} h={24} c="#fff" sw={1.500}><path d="M3 1h12M3 23h12M3 6h12v12H3zM19 4v5M19 11v2" /></Ic>
      </TaskIcon>
      <TaskIcon $w={48}>
        <svg width="24" height="24" viewBox="0 0 24 24">
          <circle cx="12" cy="12" r="11" fill="#1173c5" />
          <path d="M23 13c0-6-5-9-10-9-5 0-9 3-10 8 2-3 6-5 10-4 4 1 5 3 4 5h-4c0 3 4 4 7 3 2-.5 3-1.500 3-3z" fill="#39c6a0" />
          <path d="M11 12c-1 4 2 8 7 9-3 2-8 2-12-2-2-2-3-5-3-7 2-2 5-3 8 0z" fill="#0f4f9e" />
        </svg>
      </TaskIcon>
      <TaskIcon $w={36} $mr={10} $line="#6fb0e0">
        <svg width="20" height="20" viewBox="0 0 20 20">
          <path d="M1 3h7l2 2h9v4H1z" fill="#f4c23f" />
          <path d="M1 8h18v11H1z" fill="#f8d775" />
          <path d="M6 13h8v6h-2v-4H8v4H6z" fill="#2a8fd8" />
        </svg>
      </TaskIcon>
      <TaskIcon $w={36} $mr={10} $line="#6fb0e0"><ChromeIcon /></TaskIcon>
      <TaskIcon $w={36} $mr={10} $line="#6fb0e0">
        <svg width="24" height="24" viewBox="0 0 24 24">
          <circle cx="12" cy="12" r="10.500" fill="#2a2a2a" stroke="#a56ba0" strokeWidth="2" />
          <path d="M9 7l8 5-8 5z" fill="#eee" />
        </svg>
      </TaskIcon>
      <TaskIcon $w={36} $mr={5} $line="#6fb0e0">
        <svg width="24" height="24" viewBox="0 0 24 24">
          <circle cx="13" cy="12" r="10.500" fill="#e5673f" />
          <path d="M1 4h12v16H1z" fill="#c43e1c" />
          <path d="M5 7h4a2.800 2.800 0 0 1 0 6H7v4H5z" fill="#fff" />
        </svg>
      </TaskIcon>
      <TaskIcon $w={46} $mr={1} $bg="#9d5a26" $line="#f08020">
        <svg width="22" height="22" viewBox="0 0 22 22">
          <circle cx="11" cy="11" r="10" fill="#2ca5e0" />
          <path d="M4.500 10.800 16 6.300l-2 10-3.500-2.600-1.800 1.700-.3-3z" fill="#fff" />
        </svg>
      </TaskIcon>
      <TaskIcon $w={44} $bg="#464646" $line="#6fb0e0"><ChromeIcon /></TaskIcon>

      <Tray>
        <svg width="32" height="26" viewBox="0 0 32 26">
          <circle cx="21" cy="8" r="7" fill="#f5a030" />
          <path d="M6 25a5.500 5.500 0 0 1-1-11 8 8 0 0 1 15-2 6 6 0 0 1 5 4 4.500 4.500 0 0 1 2 9z" fill="#a9d0f0" />
          <path d="M6 25a5 5 0 0 1 0-7h20c3 2 2 7 1 7z" fill="#dbeaf7" />
        </svg>
        <Weather $ml={10}>30°C</Weather>
        <Weather $ml={11}>Mostly cloudy</Weather>
        <TrayIcon style={{ marginLeft: 17 }}><Ic w={18} h={12} c="#fff" sw={1.500}><path d="m2 10 7-7 7 7" /></Ic></TrayIcon>
        <TrayIcon><Ic w={18} h={18} c="#ccc" sw={1.200}><path d="M1 17A15 15 0 0 1 14 2M5 17A11 11 0 0 1 14 7M9 17a6 6 0 0 1 5-5" /><circle cx="14" cy="16" r="1.500" fill="#fff" stroke="none" /></Ic></TrayIcon>
        <TrayIcon><Ic w={18} h={20} c="#fff" sw={1.200}><rect x="2" y="6" width="10" height="8" rx="1" /><path d="M12 9l4-2v6l-4-2M3 3c2-1.500 6-1.500 8 0M3 17c2 1.500 6 1.500 8 0" /></Ic></TrayIcon>
        <TrayIcon><svg width="20" height="12" viewBox="0 0 20 12"><rect x=".75" y=".75" width="17" height="10.500" fill="none" stroke="#fff" strokeWidth="1.500" /><path d="M3 3h10v6H3z" fill="#fff" /><path d="M18.500 4H20v4h-1.500z" fill="#fff" /></svg></TrayIcon>
        <TrayIcon><svg width="22" height="14" viewBox="0 0 22 14"><path d="M4 14a4 4 0 0 1-.5-8A6 6 0 0 1 14 4a4.500 4.500 0 0 1 4 5 2.500 2.500 0 0 1 0 5z" fill="#ddd" /><path d="M4 14a3 3 0 0 1 1-5h13a2.500 2.500 0 0 1 0 5z" fill="#fff" /></svg></TrayIcon>
        <Clock>3:05 PM</Clock>
        <NoticeBtn>
          <svg width="20" height="20" viewBox="0 0 20 20"><path d="M0 1h20v15h-7l-3 3-3-3H0z" fill="#fff" /><path d="M4 5h12M4 8h12M4 11h8" stroke="#222" strokeWidth="1" /></svg>
        </NoticeBtn>
      </Tray>
    </Taskbar>
    <Notice>3 new notifications</Notice>
  </Page>
);

export default App;
